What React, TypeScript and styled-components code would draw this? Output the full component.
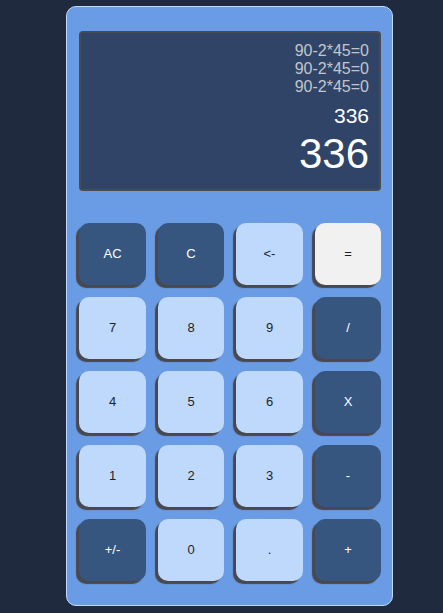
import React from "react";
import styled, { createGlobalStyle } from "styled-components";

const Global = createGlobalStyle`
  html, body {
    margin: 0;
    padding: 0;
    background: #1f2a3e;
    font-family: "Liberation Sans", Arial, sans-serif;
  }
`;

const Page = styled.div`
  padding: 6px 0 0 66px;
`;

const Card = styled.div`
  width: 325px;
  height: 598px;
  box-sizing: content-box;
  border: 1px solid #c3dafa;
  border-radius: 10px;
  background: #6a9ce6;
  padding: 0;
  display: flex;
  flex-direction: column;
`;

const Inner = styled.div`
  padding: 24px 11px 0 12px;
  display: flex;
  flex-direction: column;
  gap: 32px;
`;

const Display = styled.div`
  width: 302px;
  height: 160px;
  box-sizing: border-box;
  border: 2px solid #4a4b4f;
  border-radius: 4px;
  background: #2f4466;
  padding: 9px 10px 0 10px;
  display: flex;
  flex-direction: column;
  align-items: flex-end;
`;

const History = styled.div`
  font-size: 16px;
  line-height: 18px;
  color: #c2c6cc;
`;

const Current = styled.div`
  font-size: 21px;
  line-height: 24px;
  color: #ffffff;
  margin-top: 8px;
`;

const Result = styled.div`
  font-size: 42px;
  line-height: 48px;
  color: #ffffff;
  margin-top: 2px;
`;

const Grid = styled.div`
  display: grid;
  grid-template-columns: 67px 66px 67px 66px;
  grid-auto-rows: 62px;
  gap: 12px;
`;

type Variant = "dark" | "light" | "white";

const bg: Record<Variant, string> = {
  dark: "#36567f",
  light: "#bfd9fd",
  white: "#f1f1f1",
};

const fg: Record<Variant, string> = {
  dark: "#ffffff",
  light: "#1c1f2a",
  white: "#1c1f2a",
};

const Key = styled.button<{ $v: Variant }>`
  border: none;
  margin: 0;
  padding: 0 0 2px 0;
  border-radius: 10px;
  background: ${(p) => bg[p.$v]};
  color: ${(p) => fg[p.$v]};
  font-family: "Liberation Sans", Arial, sans-serif;
  font-size: 13px;
  box-shadow: -3px 3px 1px #48484e;
  display: flex;
  align-items: center;
  justify-content: center;
  cursor: pointer;
`;

const keys: [string, Variant][] = [
  ["AC", "dark"],
  ["C", "dark"],
  ["<-", "light"],
  ["=", "white"],
  ["7", "light"],
  ["8", "light"],
  ["9", "light"],
  ["/", "dark"],
  ["4", "light"],
  ["5", "light"],
  ["6", "light"],
  ["X", "dark"],
  ["1", "light"],
  ["2", "light"],
  ["3", "light"],
  ["-", "dark"],
  ["+/-", "dark"],
  ["0", "light"],
  [".", "light"],
  ["+", "dark"],
];

export default function App() {
  return (
    <>
      <Global />
      <Page>
        <Card>
          <Inner>
            <Display>
              <History>90-2*45=0</History>
              <History>90-2*45=0</History>
              <History>90-2*45=0</History>
              <Current>336</Current>
              <Result>336</Result>
            </Display>
            <Grid>
              {keys.map(([label, v], i) => (
                <Key key={i} $v={v}>
                  {label}
                </Key>
              ))}
            </Grid>
          </Inner>
        </Card>
      </Page>
    </>
  );
}
